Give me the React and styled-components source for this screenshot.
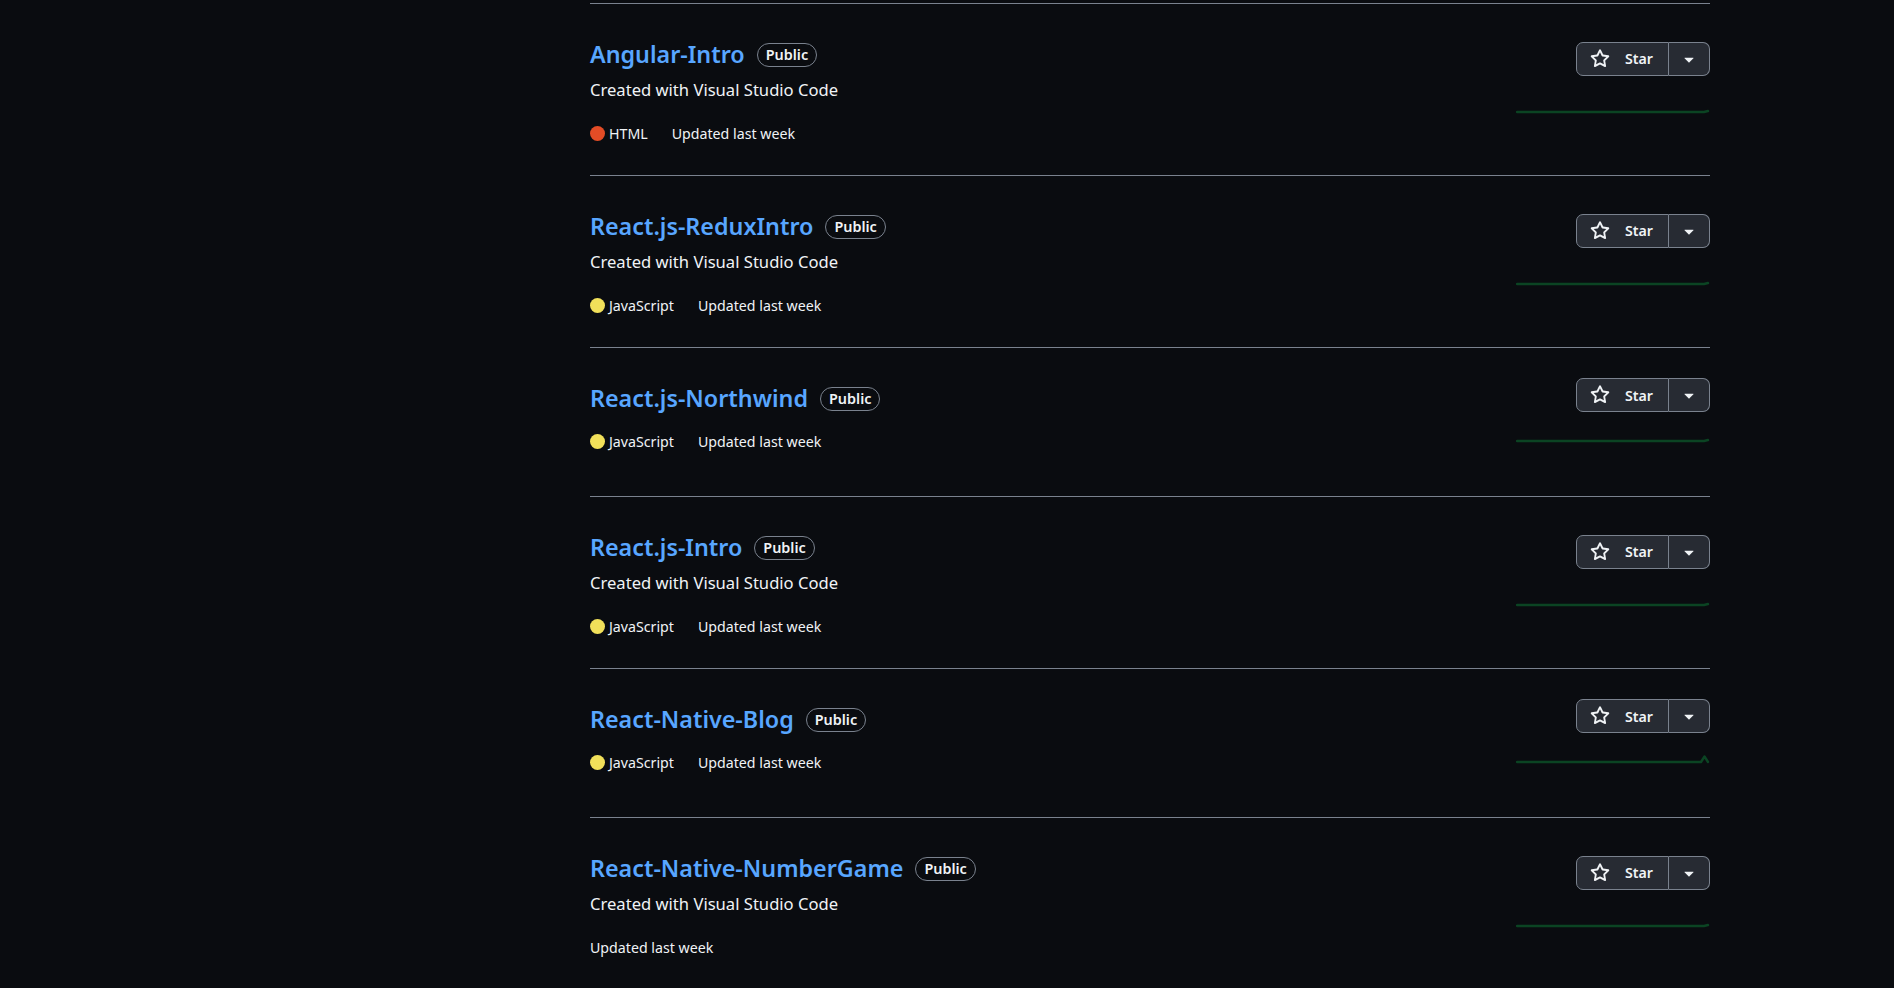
import React from 'react';
import styled, { createGlobalStyle } from 'styled-components';

const GlobalStyle = createGlobalStyle`
  html, body { margin: 0; padding: 0; background: #0a0c10; }
  body {
    font-family: "Noto Sans", "Open Sans", sans-serif;
    color: #f0f3f6;
    -webkit-font-smoothing: antialiased;
  }
  * { box-sizing: border-box; }
`;

const Page = styled.div`
  display: flex;
  min-height: 988px;
  background: #0a0c10;
`;

const Sidebar = styled.aside`
  width: 590px;
  flex-shrink: 0;
`;

const Main = styled.main`
  width: 1120px;
  padding-top: 3px;
`;

const RepoList = styled.ul`
  list-style: none;
  margin: 0;
  padding: 0;
  border-top: 1px solid #7a828e;
`;

const RepoItem = styled.li`
  display: flex;
  justify-content: space-between;
  padding: 30px 0;
  border-bottom: 1px solid #7a828e;
`;

const Info = styled.div`
  flex: 1;
  min-width: 0;
  display: flex;
  flex-direction: column;
  align-items: flex-start;
`;

const TitleRow = styled.h3`
  display: flex;
  align-items: center;
  margin: 0 0 5px;
  height: 37.5px;
  padding-top: 4px;
  font-size: 23.3px;
  font-weight: 600;
`;

const RepoLink = styled.a`
  color: #58a6ff;
  text-decoration: none;
  line-height: 33.5px;
`;

const Label = styled.span`
  display: inline-flex;
  align-items: center;
  height: 24px;
  margin-left: 12px;
  padding: 0 8px;
  border: 1px solid #7a828e;
  border-radius: 12px;
  font-size: 14.4px;
  font-weight: 600;
  color: #f0f3f6;
  line-height: 1;
`;

const Description = styled.p`
  margin: 0 0 10px;
  font-size: 16.6px;
  line-height: 26px;
  color: #f0f3f6;
`;

const Meta = styled.div`
  display: flex;
  align-items: center;
  margin-top: 10px;
  height: 22.5px;
  font-size: 14.2px;
  color: #f0f3f6;
`;

const Language = styled.span`
  display: inline-flex;
  align-items: center;
  margin-right: 24px;
`;

const LangDot = styled.span`
  width: 15px;
  height: 15px;
  border-radius: 50%;
  background: ${p => p.$color};
  margin-right: 4px;
`;

const Aside = styled.div`
  width: 200px;
  display: flex;
  flex-direction: column;
  justify-content: space-evenly;
  align-items: flex-end;
`;

const BtnGroup = styled.div`
  display: flex;
  height: 34px;
`;

const StarButton = styled.button`
  display: flex;
  align-items: center;
  gap: 15px;
  height: 34px;
  padding: 0 15px 0 13px;
  background: #272b33;
  border: 1px solid #7a828e;
  border-radius: 7px 0 0 7px;
  color: #f0f3f6;
  font-family: inherit;
  font-size: 14.2px;
  font-weight: 600;
  cursor: pointer;
  svg { width: 20px; height: 20px; fill: currentColor; }
`;

const CaretButton = styled.button`
  display: flex;
  align-items: center;
  justify-content: center;
  width: 41px;
  height: 34px;
  padding: 0;
  background: #272b33;
  border: 1px solid #7a828e;
  border-left: none;
  border-radius: 0 7px 7px 0;
  color: #f0f3f6;
  cursor: pointer;
  svg { width: 20px; height: 20px; fill: currentColor; }
`;

const SparkBox = styled.div`
  height: 54px;
  width: 194px;
  svg { display: block; }
`;

const StarIcon = () => (
  <svg viewBox="0 0 16 16" aria-hidden="true">
    <path d="M8 .25a.75.75 0 0 1 .673.418l1.882 3.815 4.21.612a.75.75 0 0 1 .416 1.279l-3.046 2.97.719 4.192a.751.751 0 0 1-1.088.791L8 12.347l-3.766 1.98a.75.75 0 0 1-1.088-.79l.72-4.194L.818 6.374a.75.75 0 0 1 .416-1.28l4.21-.611L7.327.668A.75.75 0 0 1 8 .25Zm0 2.445L6.615 5.5a.75.75 0 0 1-.564.41l-3.097.45 2.24 2.184a.75.75 0 0 1 .216.664l-.528 3.084 2.769-1.456a.75.75 0 0 1 .698 0l2.77 1.456-.53-3.084a.75.75 0 0 1 .216-.664l2.24-2.183-3.096-.45a.75.75 0 0 1-.564-.41L8 2.694Z" />
  </svg>
);

const CaretIcon = () => (
  <svg viewBox="0 0 16 16" aria-hidden="true">
    <path d="m4.427 7.427 3.396 3.396a.25.25 0 0 0 .354 0l3.396-3.396A.25.25 0 0 0 11.396 7H4.604a.25.25 0 0 0-.177.427Z" />
  </svg>
);

const Sparkline = ({ spike }) => (
  <svg width="194" height="54" viewBox="0 0 194 54">
    <path
      d={spike ? 'M1 29 L185 29 L188.5 23.5 L192 29' : 'M1 29 L188 29 L192 28'}
      fill="none"
      stroke="#0b4423"
      strokeWidth="2.4"
      strokeLinejoin="round"
      strokeLinecap="round"
    />
  </svg>
);

const LANG = {
  HTML: '#e34c26',
  JavaScript: '#f1e05a',
};

const DESC = 'Created with Visual Studio Code';

const repos = [
  { name: 'Angular-Intro', desc: DESC, lang: 'HTML' },
  { name: 'React.js-ReduxIntro', desc: DESC, lang: 'JavaScript' },
  { name: 'React.js-Northwind', lang: 'JavaScript' },
  { name: 'React.js-Intro', desc: DESC, lang: 'JavaScript' },
  { name: 'React-Native-Blog', lang: 'JavaScript', spike: true },
  { name: 'React-Native-NumberGame', desc: DESC },
];

export default function App() {
  return (
    <>
      <GlobalStyle />
      <Page>
        <Sidebar />
        <Main>
          <RepoList>
            {repos.map(r => (
              <RepoItem key={r.name}>
                <Info>
                  <TitleRow>
                    <RepoLink href="#">{r.name}</RepoLink>
                    <Label>Public</Label>
                  </TitleRow>
                  {r.desc && <Description>{r.desc}</Description>}
                  <Meta>
                    {r.lang && (
                      <Language>
                        <LangDot $color={LANG[r.lang]} />
                        {r.lang}
                      </Language>
                    )}
                    <span>Updated last week</span>
                  </Meta>
                </Info>
                <Aside>
                  <BtnGroup>
                    <StarButton>
                      <StarIcon />
                      Star
                    </StarButton>
                    <CaretButton aria-label="Add this repository to a list">
                      <CaretIcon />
                    </CaretButton>
                  </BtnGroup>
                  <SparkBox>
                    <Sparkline spike={r.spike} />
                  </SparkBox>
                </Aside>
              </RepoItem>
            ))}
          </RepoList>
        </Main>
      </Page>
    </>
  );
}
